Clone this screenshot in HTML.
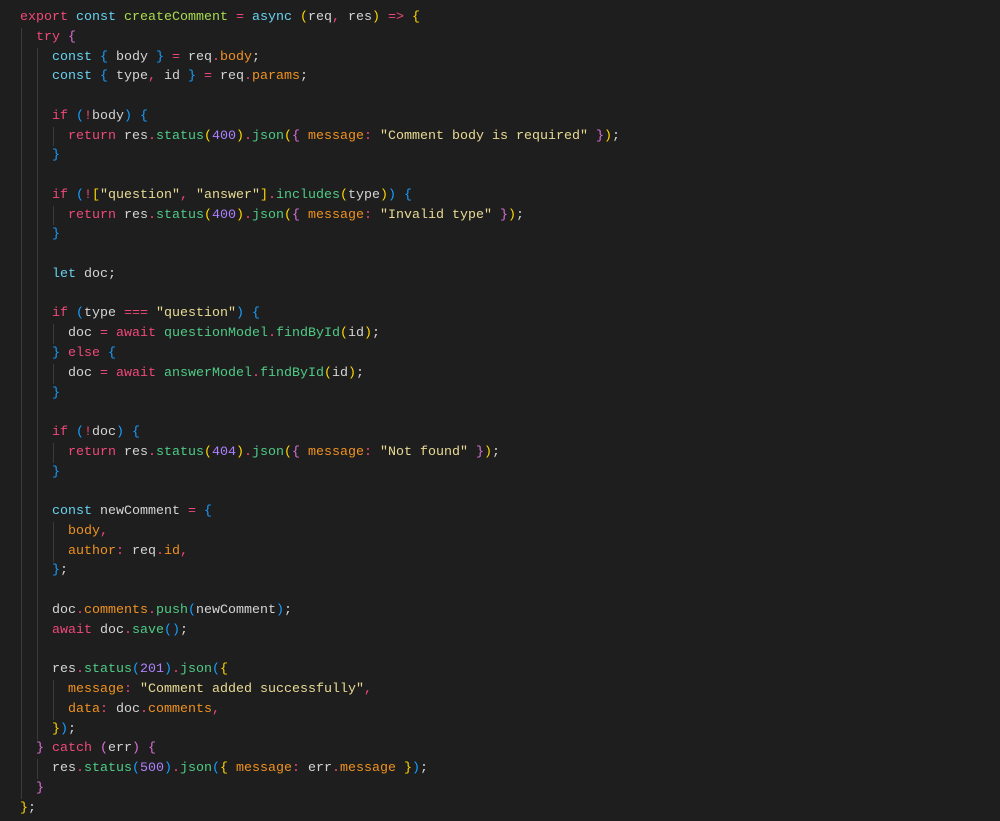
<!DOCTYPE html>
<html><head><meta charset="utf-8"><style>
html,body{margin:0;padding:0;background:#1e1e1e;width:1000px;height:821px;overflow:hidden}
pre{margin:0;position:absolute;left:20px;top:8px;font-family:"Liberation Mono",monospace;font-size:13.33px;line-height:19.77px;color:#d4d4d4;white-space:pre}
.k{color:#f0487a}.s{color:#66d2ef}.f{color:#a9dc4e}.m{color:#4ecb85}.p{color:#f0921e}.o{color:#f0487a}.st{color:#e8da94}.n{color:#ae81ff}
.b1{color:#ffd700}.b2{color:#da70d6}.b3{color:#179fff}
.g{position:absolute;width:1px;background:#3c3c3c}
</style></head><body>
<div class="g" style="left:21px;top:27.8px;height:771px"></div>
<div class="g" style="left:37px;top:47.5px;height:692px"></div>
<div class="g" style="left:37px;top:759.3px;height:19.8px"></div>
<div class="g" style="left:53px;top:126.6px;height:19.8px"></div>
<div class="g" style="left:53px;top:205.7px;height:19.8px"></div>
<div class="g" style="left:53px;top:324.3px;height:19.8px"></div>
<div class="g" style="left:53px;top:363.8px;height:19.8px"></div>
<div class="g" style="left:53px;top:442.9px;height:19.8px"></div>
<div class="g" style="left:53px;top:522px;height:39.5px"></div>
<div class="g" style="left:53px;top:680.2px;height:39.5px"></div>
<pre><span class="k">export</span> <span class="s">const</span> <span class="f">createComment</span> <span class="o">=</span> <span class="s">async</span> <span class="b1">(</span>req<span class="o">,</span> res<span class="b1">)</span> <span class="o">=&gt;</span> <span class="b1">{</span>
  <span class="k">try</span> <span class="b2">{</span>
    <span class="s">const</span> <span class="b3">{</span> body <span class="b3">}</span> <span class="o">=</span> req<span class="o">.</span><span class="p">body</span>;
    <span class="s">const</span> <span class="b3">{</span> type<span class="o">,</span> id <span class="b3">}</span> <span class="o">=</span> req<span class="o">.</span><span class="p">params</span>;

    <span class="k">if</span> <span class="b3">(</span><span class="o">!</span>body<span class="b3">)</span> <span class="b3">{</span>
      <span class="k">return</span> res<span class="o">.</span><span class="m">status</span><span class="b1">(</span><span class="n">400</span><span class="b1">)</span><span class="o">.</span><span class="m">json</span><span class="b1">(</span><span class="b2">{</span> <span class="p">message</span><span class="o">:</span> <span class="st">"Comment body is required"</span> <span class="b2">}</span><span class="b1">)</span>;
    <span class="b3">}</span>

    <span class="k">if</span> <span class="b3">(</span><span class="o">!</span><span class="b1">[</span><span class="st">"question"</span><span class="o">,</span> <span class="st">"answer"</span><span class="b1">]</span><span class="o">.</span><span class="m">includes</span><span class="b1">(</span>type<span class="b1">)</span><span class="b3">)</span> <span class="b3">{</span>
      <span class="k">return</span> res<span class="o">.</span><span class="m">status</span><span class="b1">(</span><span class="n">400</span><span class="b1">)</span><span class="o">.</span><span class="m">json</span><span class="b1">(</span><span class="b2">{</span> <span class="p">message</span><span class="o">:</span> <span class="st">"Invalid type"</span> <span class="b2">}</span><span class="b1">)</span>;
    <span class="b3">}</span>

    <span class="s">let</span> doc;

    <span class="k">if</span> <span class="b3">(</span>type <span class="o">===</span> <span class="st">"question"</span><span class="b3">)</span> <span class="b3">{</span>
      doc <span class="o">=</span> <span class="k">await</span> <span class="m">questionModel</span><span class="o">.</span><span class="m">findById</span><span class="b1">(</span>id<span class="b1">)</span>;
    <span class="b3">}</span> <span class="k">else</span> <span class="b3">{</span>
      doc <span class="o">=</span> <span class="k">await</span> <span class="m">answerModel</span><span class="o">.</span><span class="m">findById</span><span class="b1">(</span>id<span class="b1">)</span>;
    <span class="b3">}</span>

    <span class="k">if</span> <span class="b3">(</span><span class="o">!</span>doc<span class="b3">)</span> <span class="b3">{</span>
      <span class="k">return</span> res<span class="o">.</span><span class="m">status</span><span class="b1">(</span><span class="n">404</span><span class="b1">)</span><span class="o">.</span><span class="m">json</span><span class="b1">(</span><span class="b2">{</span> <span class="p">message</span><span class="o">:</span> <span class="st">"Not found"</span> <span class="b2">}</span><span class="b1">)</span>;
    <span class="b3">}</span>

    <span class="s">const</span> newComment <span class="o">=</span> <span class="b3">{</span>
      <span class="p">body</span><span class="o">,</span>
      <span class="p">author</span><span class="o">:</span> req<span class="o">.</span><span class="p">id</span><span class="o">,</span>
    <span class="b3">}</span>;

    doc<span class="o">.</span><span class="p">comments</span><span class="o">.</span><span class="m">push</span><span class="b3">(</span>newComment<span class="b3">)</span>;
    <span class="k">await</span> doc<span class="o">.</span><span class="m">save</span><span class="b3">()</span>;

    res<span class="o">.</span><span class="m">status</span><span class="b3">(</span><span class="n">201</span><span class="b3">)</span><span class="o">.</span><span class="m">json</span><span class="b3">(</span><span class="b1">{</span>
      <span class="p">message</span><span class="o">:</span> <span class="st">"Comment added successfully"</span><span class="o">,</span>
      <span class="p">data</span><span class="o">:</span> doc<span class="o">.</span><span class="p">comments</span><span class="o">,</span>
    <span class="b1">}</span><span class="b3">)</span>;
  <span class="b2">}</span> <span class="k">catch</span> <span class="b2">(</span>err<span class="b2">)</span> <span class="b2">{</span>
    res<span class="o">.</span><span class="m">status</span><span class="b3">(</span><span class="n">500</span><span class="b3">)</span><span class="o">.</span><span class="m">json</span><span class="b3">(</span><span class="b1">{</span> <span class="p">message</span><span class="o">:</span> err<span class="o">.</span><span class="p">message</span> <span class="b1">}</span><span class="b3">)</span>;
  <span class="b2">}</span>
<span class="b1">}</span>;</pre>
</body></html>
